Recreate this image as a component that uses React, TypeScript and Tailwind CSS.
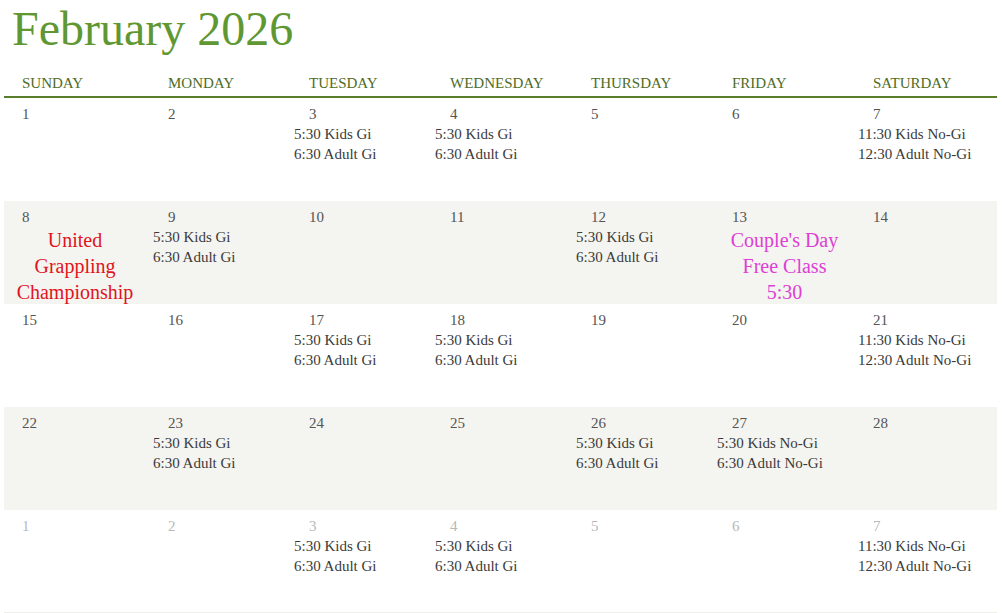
import React from 'react';

type Cell = {
  day: number;
  muted?: boolean;
  events?: string[];
  special?: { lines: string[]; color: string };
};

const GI = ['5:30 Kids Gi', '6:30 Adult Gi'];
const NOGI_SAT = ['11:30 Kids No-Gi', '12:30 Adult No-Gi'];
const NOGI_FRI = ['5:30 Kids No-Gi', '6:30 Adult No-Gi'];

const days = ['SUNDAY', 'MONDAY', 'TUESDAY', 'WEDNESDAY', 'THURSDAY', 'FRIDAY', 'SATURDAY'];

const weeks: Cell[][] = [
  [
    { day: 1 },
    { day: 2 },
    { day: 3, events: GI },
    { day: 4, events: GI },
    { day: 5 },
    { day: 6 },
    { day: 7, events: NOGI_SAT },
  ],
  [
    { day: 8, special: { lines: ['United', 'Grappling', 'Championship'], color: 'text-[#e0141c]' } },
    { day: 9, events: GI },
    { day: 10 },
    { day: 11 },
    { day: 12, events: GI },
    { day: 13, special: { lines: ["Couple's Day", 'Free Class', '5:30'], color: 'text-[#dd3fd4]' } },
    { day: 14 },
  ],
  [
    { day: 15 },
    { day: 16 },
    { day: 17, events: GI },
    { day: 18, events: GI },
    { day: 19 },
    { day: 20 },
    { day: 21, events: NOGI_SAT },
  ],
  [
    { day: 22 },
    { day: 23, events: GI },
    { day: 24 },
    { day: 25 },
    { day: 26, events: GI },
    { day: 27, events: NOGI_FRI },
    { day: 28 },
  ],
  [
    { day: 1, muted: true },
    { day: 2, muted: true },
    { day: 3, muted: true, events: GI },
    { day: 4, muted: true, events: GI },
    { day: 5, muted: true },
    { day: 6, muted: true },
    { day: 7, muted: true, events: NOGI_SAT },
  ],
];

export default function App() {
  return (
    <div className="w-[1002px] h-[613px] overflow-hidden bg-white font-['Liberation_Serif',serif]">
      <h1 className="pt-[5px] pl-[12px] text-[48px] leading-none text-[#5f9833]">February 2026</h1>

      <div className="mt-[20px] mx-[4px] w-[993px] border-b-2 border-[#5a7d2c] pb-[3px] grid grid-cols-[142px_repeat(6,141px)]">
        {days.map((d, i) => (
          <div key={d} className={`${i === 0 ? 'pl-[18px]' : 'pl-[22px]'} text-[15px] leading-[20px] text-[#4f6c25]`}>
            {d}
          </div>
        ))}
      </div>

      {weeks.map((week, wi) => (
        <div
          key={wi}
          className={`mx-[4px] w-[993px] h-[103px] grid grid-cols-[142px_repeat(6,141px)] ${
            wi % 2 === 1 ? 'bg-[#f4f4f0]' : 'bg-white'
          } ${wi === 4 ? 'border-b border-[#eeeeea]' : ''}`}
        >
          {week.map((c, ci) => (
            <div key={ci} className="pt-[6px] flex flex-col">
              <div
                className={`${ci === 0 ? 'pl-[18px]' : 'pl-[22px]'} text-[15px] leading-[20px] ${
                  c.muted ? 'text-[#b8b8b8]' : 'text-[#555555]'
                }`}
              >
                {c.day}
              </div>
              {c.events && (
                <div className="pl-[7px] text-[15px] leading-[20px] text-[#3a3a3a]">
                  {c.events.map((e) => (
                    <div key={e}>{e}</div>
                  ))}
                </div>
              )}
              {c.special && (
                <div className={`text-center text-[20px] leading-[26px] ${c.special.color} ${ci === 5 ? 'pl-[8px]' : ''}`}>
                  {c.special.lines.map((l) => (
                    <div key={l}>{l}</div>
                  ))}
                </div>
              )}
            </div>
          ))}
        </div>
      ))}
    </div>
  );
}
